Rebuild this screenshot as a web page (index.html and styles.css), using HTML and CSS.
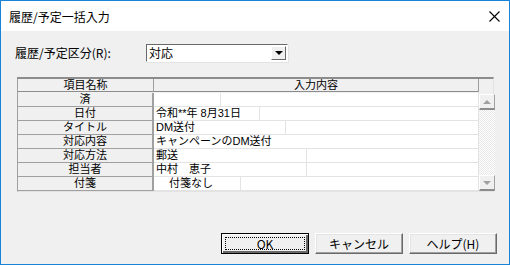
FILE: index.html
```html
<!DOCTYPE html>
<html lang="ja">
<head>
    <meta charset="UTF-8">
    <title>履歴/予定一括入力</title>
    <link rel="stylesheet" href="styles.css">
</head>
<body>
    <div class="window">
        <div class="titlebar">
            <span class="title">履歴/予定一括入力</span>
            <svg class="close" width="11" height="11" viewBox="0 0 11 11">
                <path d="M0.5 0.5 L10.5 10.5 M10.5 0.5 L0.5 10.5" stroke="#000" stroke-width="1.1" fill="none"/>
            </svg>
        </div>

        <div class="content">
            <div class="field-row">
                <label class="field-label">履歴/予定区分(R):</label>
                <div class="combo">
                    <span class="combo-text">対応</span>
                    <span class="combo-btn"><span class="arrow-down"></span></span>
                </div>
            </div>

            <div class="grid">
                <div class="cell head">項目名称</div>
                <div class="cell head">入力内容</div>
                <div class="cell corner"></div>

                <div class="cell name">済</div>
                <div class="cell value"><span class="part w67"></span></div>
                <div class="scrollbar">
                    <div class="sb-btn"><span class="tri-up"></span></div>
                    <div class="sb-track"></div>
                    <div class="sb-btn"><span class="tri-down"></span></div>
                </div>

                <div class="cell name">日付</div>
                <div class="cell value"><span class="part w106">令和**年 8月31日</span></div>

                <div class="cell name">タイトル</div>
                <div class="cell value"><span class="part w132">DM送付</span></div>

                <div class="cell name">対応内容</div>
                <div class="cell value"><span class="part">キャンペーンのDM送付</span></div>

                <div class="cell name">対応方法</div>
                <div class="cell value"><span class="part w153">郵送</span></div>

                <div class="cell name">担当者</div>
                <div class="cell value"><span class="part w153">中村　恵子</span></div>

                <div class="cell name">付箋</div>
                <div class="cell value"><span class="part w87 indent">付箋なし</span></div>
            </div>

            <div class="buttons">
                <button class="btn default"><span class="focus">OK</span></button>
                <button class="btn">キャンセル</button>
                <button class="btn">ヘルプ(H)</button>
            </div>
        </div>
    </div>
</body>
</html>
```

FILE: styles.css
```css
:root {
    --face: #f0f0f0;
    --frame: #1883d7;
    --line: #a0a0a0;
    --light-line: #e3e3e3;
}

* {
    box-sizing: border-box;
    margin: 0;
    padding: 0;
}

body {
    width: 510px;
    height: 265px;
    font-family: "Noto Sans CJK JP", "Noto Sans", sans-serif;
    font-size: 12px;
    color: #000;
    background: var(--face);
}

.window {
    width: 510px;
    height: 265px;
    border: 1px solid var(--frame);
    display: flex;
    flex-direction: column;
    background: var(--face);
}

.titlebar {
    height: 30px;
    background: #fff;
    display: flex;
    align-items: center;
    justify-content: space-between;
    padding: 1px 10px 0 8px;
}

.title {
    font-size: 12px;
    line-height: 14px;
}

.close {
    margin-top: -1px;
    margin-right: -1px;
}

.content {
    flex: 1;
    padding: 13px 12px 0 16px;
    display: flex;
    flex-direction: column;
}

/* combo row */
.field-row {
    display: flex;
    align-items: center;
    height: 18px;
}

.field-label {
    width: 131px;
    margin-left: -2px;
    line-height: 14px;
}

.combo {
    width: 142px;
    height: 18px;
    background: #fff;
    border-top: 1px solid #696969;
    border-left: 1px solid #696969;
    border-right: 1px solid #fff;
    border-bottom: 1px solid #fff;
    box-shadow: 1px 1px 0 #e3e3e3;
    display: flex;
    align-items: center;
}

.combo-text {
    flex: 1;
    padding-left: 2px;
    line-height: 14px;
}

.combo-btn {
    width: 15px;
    height: 14px;
    margin-right: 1px;
    background: var(--face);
    border-top: 1px solid #fff;
    border-left: 1px solid #fff;
    border-right: 1px solid #696969;
    border-bottom: 1px solid #696969;
    display: flex;
    align-items: center;
    justify-content: center;
}

.arrow-down {
    width: 0;
    height: 0;
    border-left: 4px solid transparent;
    border-right: 4px solid transparent;
    border-top: 4px solid #000;
}

/* grid */
.grid {
    margin-top: 15px;
    width: 477px;
    display: grid;
    grid-template-columns: 136px 325px 16px;
    grid-template-rows: repeat(8, 14px);
    border-top: 2px solid #8c8c8c;
    border-left: 1px solid var(--line);
    border-right: 1px solid var(--light-line);
    border-bottom: 1px solid var(--light-line);
    font-family: "Liberation Sans", "Noto Sans CJK JP", sans-serif;
    font-size: 11px;
    line-height: 13px;
}

.cell {
    height: 14px;
    white-space: nowrap;
}

.head {
    background: var(--face);
    text-align: center;
    border-bottom: 1px solid #8c8c8c;
    border-right: 1px solid var(--line);
    height: 13px;
    line-height: 12px;
}

.corner {
    border-bottom: none;
    border-right: none;
}

.name {
    background: var(--face);
    text-align: center;
    border-bottom: 1px solid var(--line);
    border-right: 2px solid var(--line);
}

.value {
    background: #fff;
    border-bottom: 1px solid var(--light-line);
    border-right: 1px solid var(--light-line);
    display: flex;
}

.part {
    padding-left: 2px;
    height: 13px;
}

.w67 { width: 67px; border-right: 1px solid var(--light-line); }
.w87 { width: 87px; border-right: 1px solid var(--light-line); }
.w106 { width: 106px; border-right: 1px solid var(--light-line); }
.w132 { width: 132px; border-right: 1px solid var(--light-line); }
.w153 { width: 153px; border-right: 1px solid var(--light-line); }

.indent {
    padding-left: 15px;
}

/* scrollbar */
.scrollbar {
    grid-column: 3;
    grid-row: 2 / span 7;
    display: flex;
    flex-direction: column;
    padding-top: 1px;
}

.sb-btn {
    height: 16px;
    background: var(--face);
    border-top: 1px solid #fff;
    border-left: 1px solid #fff;
    border-right: 1px solid #a0a0a0;
    border-bottom: 2px solid #8c8c8c;
    display: flex;
    align-items: center;
    justify-content: center;
}

.sb-track {
    flex: 1;
    background: repeating-conic-gradient(#e8e8e8 0 25%, #fff 0 50%) 0 0 / 2px 2px;
}

.tri-up,
.tri-down {
    width: 0;
    height: 0;
    border-left: 4px solid transparent;
    border-right: 4px solid transparent;
}

.tri-up {
    border-bottom: 4px solid #a0a0a0;
}

.tri-down {
    border-top: 4px solid #a0a0a0;
}

/* buttons */
.buttons {
    margin-top: 41px;
    display: flex;
    justify-content: flex-end;
    gap: 6px;
}

.btn {
    width: 88px;
    height: 21px;
    font-family: inherit;
    font-size: 12px;
    line-height: 14px;
    color: #000;
    background: var(--face);
    border-top: 1px solid #fff;
    border-left: 1px solid #fff;
    border-right: 1px solid #696969;
    border-bottom: 1px solid #696969;
    box-shadow: inset -1px -1px 0 #a0a0a0, inset 1px 1px 0 #e3e3e3;
}

.btn.default {
    border: 1px solid #000;
    box-shadow: inset 1px 1px 0 #fff, inset -2px -2px 0 #696969;
    padding: 3px;
}

.focus {
    display: block;
    height: 13px;
    border: 1px dotted #000;
    line-height: 11px;
}
```
